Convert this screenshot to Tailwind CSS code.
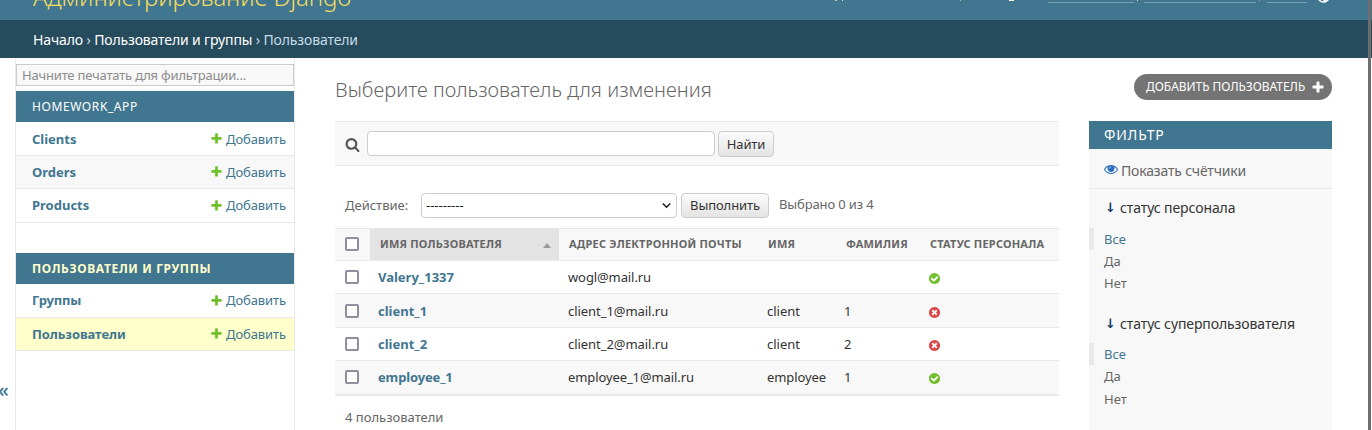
<!DOCTYPE html>
<html lang="ru">
<head>
<meta charset="utf-8">
<title>Администрирование Django</title>
<script src="https://cdn.jsdelivr.net/npm/@tailwindcss/browser@4"></script>
</head>
<body class="w-[1372px] h-[430px] overflow-hidden bg-white font-['Noto_Sans',sans-serif] text-[13px] text-[#333] flex">
<svg class="hidden">
  <symbol id="plus" viewBox="0 0 1792 1792"><path d="M1600 796v192q0 40-28 68t-68 28h-416v416q0 40-28 68t-68 28h-192q-40 0-68-28t-28-68v-416h-416q-40 0-68-28t-28-68v-192q0-40 28-68t68-28h416v-416q0-40 28-68t68-28h192q40 0 68 28t28 68v416h416q40 0 68 28t28 68z"/></symbol>
  <symbol id="yes" viewBox="0 0 1792 1792"><path fill="#70bf2b" d="M1412 734q0-28-18-46l-91-90q-19-19-45-19t-45 19l-408 407-226-226q-19-19-45-19t-45 19l-91 90q-18 18-18 46 0 27 18 45l362 362q19 19 45 19 27 0 46-19l543-543q18-18 18-45zm252 162q0 209-103 385.500t-279.500 279.500-385.500 103-385.500-103-279.500-279.500-103-385.500 103-385.500 279.500-279.500 385.500-103 385.500 103 279.500 279.500 103 385.500z"/></symbol>
  <symbol id="no" viewBox="0 0 1792 1792"><path fill="#dd4646" d="M1277 1122q0-26-19-45l-181-181 181-181q19-19 19-45 0-27-19-46l-90-90q-19-19-46-19-26 0-45 19l-181 181-181-181q-19-19-45-19-27 0-46 19l-90 90q-19 19-19 46 0 26 19 45l181 181-181 181q-19 19-19 45 0 27 19 46l90 90q19 19 46 19 26 0 45-19l181-181 181 181q19 19 45 19 27 0 46-19l90-90q19-19 19-46zm387-226q0 209-103 385.500t-279.500 279.500-385.500 103-385.500-103-279.500-279.500-103-385.500 103-385.500 279.500-279.500 385.500-103 385.500 103 279.500 279.500 103 385.500z"/></symbol>
</svg>
<div class="w-[1368px] shrink-0 flex flex-col">
  <header class="h-5 shrink-0 bg-[#417690] overflow-hidden flex">
    <div class="w-[835px] pl-[33px] -mt-[19px] text-[24px] leading-[32px] tracking-[-0.1px] font-light text-[#f5dd5d] whitespace-nowrap">Администрирование Django</div>
    <!-- lower edge of the user tools line -->
    <div class="flex h-[3px] items-start">
      <i class="w-[2px] h-px bg-[#c9c8a0]"></i><i class="ml-[5px] w-px h-px bg-[#e6e6b4]"></i>
      <i class="ml-[117px] w-px h-px bg-[#a5c08e]"></i><i class="ml-[48px] w-[5px] h-px bg-[#ffc]"></i>
      <i class="ml-[34px] mt-[2px] w-[86px] h-px bg-[#7b9eb0]"></i><i class="ml-[3px] w-px h-px bg-[#c9d6a8]"></i>
      <i class="ml-[6px] mt-[2px] w-[112px] h-px bg-[#7b9eb0]"></i><i class="ml-[3px] w-px h-px bg-[#a5b08e]"></i>
      <i class="ml-[7px] mt-[2px] w-[40px] h-px bg-[#7b9eb0]"></i>
      <svg class="ml-[10px] h-[3px] w-[13px]" viewBox="0 10 13 3"><circle cx="6.500" cy="6.300" r="5.700" fill="none" stroke="#fff" stroke-width="1.400"/><path d="M6.500 0a6.300 6.300 0 0 1 0 12.600z" fill="#fff"/></svg>
    </div>
  </header>
  <nav class="h-[38px] shrink-0 bg-[#264b5d] pl-[33px] pt-px text-[14px] leading-[38px] tracking-[-0.14px] text-[#c4dce8] whitespace-nowrap"><span class="text-white">Начало</span> › <span class="text-white">Пользователи и группы</span> › Пользователи</nav>
  <div class="flex h-[372px]">
    <div class="w-[15px] pt-[320px] text-[20px] leading-6 font-medium text-[#417690] -indent-[2px]">«</div>
    <aside class="w-[280px] border-x border-[#eaeaea] whitespace-nowrap text-[#417690]">
      <div class="mt-[6px] h-[22px] border border-[#ccc] bg-[#f8f8f8] px-[5px] leading-5 tracking-[-0.19px] text-[#8c8c8c]">Начните печатать для фильтрации...</div>
      <div class="mt-[5px] h-[31px] bg-[#417690] pl-4 text-[12px] leading-[31px] tracking-[0.6px] text-white">HOMEWORK_APP</div>
      <div class="h-[34px] border-b border-[#e8e8e8] pl-4 pr-2 flex items-center"><b class="flex-1 pt-[2px]">Clients</b><svg class="size-[13px] mr-[3px] fill-[#70bf2b]"><use href="#plus"/></svg><span class="pt-[2px] tracking-[-0.1px]">Добавить</span></div>
      <div class="h-[33px] border-b border-[#e8e8e8] bg-[#f8f8f8] pl-4 pr-2 flex items-center"><b class="flex-1 pt-px">Orders</b><svg class="size-[13px] mr-[3px] mb-px fill-[#70bf2b]"><use href="#plus"/></svg><span class="pt-px tracking-[-0.1px]">Добавить</span></div>
      <div class="h-[34px] border-b border-[#e8e8e8] pl-4 pr-2 flex items-center"><b class="flex-1">Products</b><svg class="size-[13px] mr-[3px] mb-px fill-[#70bf2b]"><use href="#plus"/></svg><span class="tracking-[-0.1px]">Добавить</span></div>
      <div class="mt-[30px] h-[31px] bg-[#417690] pl-4 text-[12px] leading-[31px] tracking-[0.65px] font-bold text-[#ffc]">ПОЛЬЗОВАТЕЛИ И ГРУППЫ</div>
      <div class="h-[34px] border-b border-[#e8e8e8] pl-4 pr-2 flex items-center"><b class="flex-1 tracking-[-0.15px]">Группы</b><svg class="size-[13px] mr-[3px] mb-px fill-[#70bf2b]"><use href="#plus"/></svg><span class="tracking-[-0.1px]">Добавить</span></div>
      <div class="h-[33px] border-b border-[#e8e8e8] bg-[#ffc] pl-4 pr-2 flex items-center"><b class="flex-1 pt-px tracking-[-0.1px]">Пользователи</b><svg class="size-[13px] mr-[3px] mb-px fill-[#70bf2b]"><use href="#plus"/></svg><span class="pt-px tracking-[-0.1px]">Добавить</span></div>
    </aside>
    <main class="ml-10 w-[997px] whitespace-nowrap">
      <div class="h-[63px] flex justify-between">
        <h1 class="pt-[18px] text-[20px] leading-7 tracking-[0.03px] font-light text-[#666]">Выберите пользователь для изменения</h1>
        <div class="mt-4 h-[26px] w-[198px] rounded-full bg-[#747474] pl-3 pr-[7px] flex items-center justify-between text-[12px] tracking-[-0.04px] text-white"><span>ДОБАВИТЬ ПОЛЬЗОВАТЕЛЬ</span><svg class="size-[14px] fill-white"><use href="#plus"/></svg></div>
      </div>
      <div class="flex gap-[30px]">
        <section class="w-[724px]">
          <div class="h-[45px] border-y border-[#e8e8e8] bg-[#f8f8f8] flex pl-[10px]">
            <svg class="mt-[15px] size-[15px] fill-[#555]" viewBox="0 0 1792 1792"><path d="M1216 832q0-185-131.500-316.500t-316.500-131.500-316.500 131.500-131.500 316.500 131.500 316.500 316.500 131.500 316.500-131.500 131.500-316.500zm512 832q0 52-38 90t-90 38q-54 0-90-38l-343-342q-179 124-399 124-143 0-273.500-55.500t-225-150-150-225-55.500-273.500 55.500-273.500 150-225 225-150 273.500-55.500 273.500 55.500 225 150 150 225 55.500 273.500q0 220-124 399l343 343q37 37 37 90z"/></svg>
            <div class="ml-[7px] mt-[9px] h-[25px] w-[348px] rounded border border-[#ccc] bg-white"></div>
            <div class="ml-[3px] mt-[9px] h-[26px] w-14 rounded border border-[#ccc] bg-gradient-to-b from-[#fbfbfb] to-[#e4e4e4] text-center leading-6 tracking-[-0.1px]">Найти</div>
          </div>
          <div class="h-[62px] pt-[27px] pl-[10px] flex text-[#666]">
            <span class="w-[76px] leading-[25px]">Действие:</span>
            <div class="h-[25px] w-[256px] rounded border border-[#ccc] bg-white pl-1 pr-[5px] flex items-center justify-between text-[#222]"><span>---------</span><svg class="size-[9px]" viewBox="0 0 9 9" fill="none" stroke="#222" stroke-width="1.6"><path d="M.8 2.5 4.500 6.200 8.200 2.500"/></svg></div>
            <div class="ml-1 h-[25px] w-[88px] rounded border border-[#ccc] bg-gradient-to-b from-[#fbfbfb] to-[#e4e4e4] text-center leading-[23px] tracking-[-0.1px] text-[#333]">Выполнить</div>
            <span class="ml-[10px] leading-[23px] tracking-[-0.13px]">Выбрано 0 из 4</span>
          </div>
          <div class="grid grid-cols-[35px_189px_199px_78px_84px_139px] border-b border-[#e8e8e8]">
            <div class="col-span-6 grid grid-cols-subgrid h-[33px] border-y border-[#e8e8e8] bg-[#f8f8f8] text-[11px] leading-[30px] tracking-[0.2px] font-bold text-[#666]">
              <i class="ml-[10px] mt-2 size-[14px] rounded-[2px] border-2 border-[#8f8f9d] bg-white"></i>
              <div class="bg-[#e3e3e3] pl-[10px] pr-2 flex items-start justify-between"><span>ИМЯ ПОЛЬЗОВАТЕЛЯ</span><svg class="mt-[14px] h-[5px] w-2 fill-[#999]" viewBox="0 0 8 5"><path d="M0 5 4 0 8 5z"/></svg></div>
              <span class="pl-[10px]">АДРЕС ЭЛЕКТРОННОЙ ПОЧТЫ</span><span class="pl-[10px]">ИМЯ</span><span class="pl-[10px]">ФАМИЛИЯ</span><span class="pl-[10px]">СТАТУС ПЕРСОНАЛА</span>
            </div>
            <div class="col-span-6 grid grid-cols-subgrid h-[33px] border-b border-[#e8e8e8] leading-8">
              <i class="ml-[10px] mt-[9px] size-[14px] rounded-[2px] border-2 border-[#8f8f9d] bg-white"></i><b class="pl-2 text-[#417690]">Valery_1337</b><span class="pl-[9px] tracking-[-0.1px]">wogl@mail.ru</span><span class="pl-2"></span><span class="pl-2"></span><svg class="ml-2 mt-[11px] size-[13px]"><use href="#yes"/></svg>
            </div>
            <div class="col-span-6 grid grid-cols-subgrid h-[34px] border-b border-[#e8e8e8] bg-[#f8f8f8] leading-[34px]">
              <i class="ml-[10px] mt-[10px] size-[14px] rounded-[2px] border-2 border-[#8f8f9d] bg-white"></i><b class="pl-2 text-[#417690]">client_1</b><span class="pl-[9px] tracking-[-0.05px]">client_1@mail.ru</span><span class="pl-[9px]">client</span><span class="pl-2">1</span><svg class="ml-2 mt-3 size-[13px]"><use href="#no"/></svg>
            </div>
            <div class="col-span-6 grid grid-cols-subgrid h-[33px] border-b border-[#e8e8e8] leading-8">
              <i class="ml-[10px] mt-[9px] size-[14px] rounded-[2px] border-2 border-[#8f8f9d] bg-white"></i><b class="pl-2 text-[#417690]">client_2</b><span class="pl-[9px] tracking-[-0.05px]">client_2@mail.ru</span><span class="pl-[9px]">client</span><span class="pl-2">2</span><svg class="ml-2 mt-[11px] size-[13px]"><use href="#no"/></svg>
            </div>
            <div class="col-span-6 grid grid-cols-subgrid h-[34px] border-b border-[#e8e8e8] bg-[#f8f8f8] leading-8">
              <i class="ml-[10px] mt-[9px] size-[14px] rounded-[2px] border-2 border-[#8f8f9d] bg-white"></i><b class="pl-2 tracking-[-0.15px] text-[#417690]">employee_1</b><span class="pl-[9px] tracking-[-0.1px]">employee_1@mail.ru</span><span class="pl-[9px] tracking-[-0.1px]">employee</span><span class="pl-2">1</span><svg class="ml-2 mt-[11px] size-[13px]"><use href="#yes"/></svg>
            </div>
          </div>
          <div class="pl-[10px] pt-[11px] leading-5 text-[#666]">4 пользователи</div>
        </section>
        <section class="w-[243px] h-[309px] bg-[#f8f8f8] text-[#666]">
          <div class="h-7 bg-[#417690] pl-[15px] text-[14px] leading-7 tracking-[0.8px] text-white">ФИЛЬТР</div>
          <div class="h-10 border-b border-[#e8e8e8] pl-[15px] pt-[3px] flex items-center gap-[3px]"><svg class="size-[14px] -mt-[3px]" viewBox="0 0 1792 1792"><path fill="#2b70bf" d="M1664 960q-152-236-381-353 61 104 61 225 0 185-131.500 316.500t-316.500 131.500-316.500-131.500-131.500-316.500q0-121 61-225-229 117-381 353 133 205 333.500 326.500t434.500 121.500 434.500-121.500 333.500-326.500zm-720-384q0-20-14-34t-34-14q-125 0-214.500 89.500t-89.500 214.500q0 20 14 34t34 14 34-14 14-34q0-86 61-147t147-61q20 0 34-14t14-34zm848 384q0 34-20 69-140 230-376.500 368.500t-499.500 138.500-499.500-139-376.500-368q-20-35-20-69t20-69q140-229 376.500-368t499.500-139 499.500 139 376.500 368q20 35 20 69z"/><circle cx="896" cy="850" r="330" fill="#2b70bf"/><path d="M700 830q0-190 196-200" fill="none" stroke="#d5e5f5" stroke-width="90"/></svg><span class="text-[14px] tracking-[-0.18px]">Показать счётчики</span></div>
          <div class="pt-[9px] pl-[16px] leading-5 text-[#333] flex text-[14px] tracking-[-0.1px]"><b class="w-[15px] font-['DejaVu_Sans'] text-[13px] text-[#1b3a66]">↓</b><span>статус персонала</span></div>
          <div class="mt-[10px] border-l-[5px] border-[#e8e8e8] pl-[10px] leading-[22px] text-[#417690]">Все</div>
          <div class="pl-[15px] leading-[22px]">Да</div><div class="pl-[15px] leading-[22px]">Нет</div>
          <div class="pt-[20px] pl-[16px] leading-5 text-[#333] flex text-[14px] tracking-[-0.1px]"><b class="w-[15px] font-['DejaVu_Sans'] text-[13px] text-[#1b3a66]">↓</b><span>статус суперпользователя</span></div>
          <div class="mt-[9px] border-l-[5px] border-[#e8e8e8] pl-[10px] leading-[22px] text-[#417690]">Все</div>
          <div class="pl-[15px] leading-[22px]">Да</div><div class="pl-[15px] pt-px leading-[22px]">Нет</div>
        </section>
      </div>
    </main>
  </div>
</div>
<div class="w-[3px] shrink-0 bg-[#6e6e6e]"></div>
<div class="w-px shrink-0 flex flex-col"><i class="h-5 bg-[#417690]"></i><i class="h-[38px] bg-[#264b5d]"></i></div>
</body>
</html>
